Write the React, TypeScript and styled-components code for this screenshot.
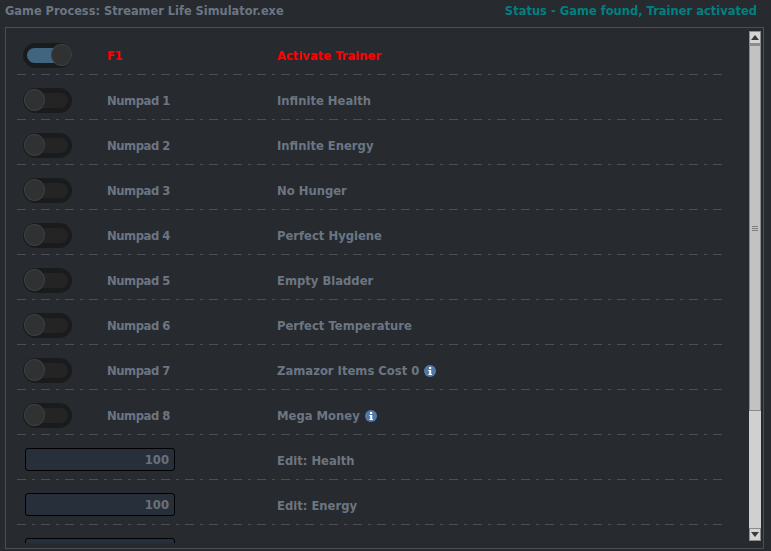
import React from 'react'
import styled, { createGlobalStyle } from 'styled-components'

const GlobalStyle = createGlobalStyle`
  html, body {
    margin: 0;
    height: 100%;
    background: #272a2f;
    overflow: hidden;
  }
`

const Page = styled.div`
  width: 771px;
  height: 551px;
  display: flex;
  flex-direction: column;
  padding: 0 5px;
  box-sizing: border-box;
  font-family: 'DejaVu Sans', Verdana, sans-serif;
  font-size: 11.6px;
  font-weight: bold;
  color: #6c7683;
`

const Header = styled.div`
  height: 27px;
  flex: none;
  display: flex;
  justify-content: space-between;
  align-items: flex-start;
  padding: 4px 9px 0 0;
  box-sizing: border-box;
  line-height: 15px;
`

const ProcessName = styled.span`
  color: #6c7683;
  font-size: 11.4px;
`

const Status = styled.span`
  color: #008080;
  font-size: 11.5px;
`

const Panel = styled.div`
  width: 759px;
  height: 522px;
  box-sizing: border-box;
  border: 1px solid #4b4e52;
  display: flex;
  padding: 2px 2px 5px 0;
`

const List = styled.div`
  width: 743px;
  flex: none;
  overflow: hidden;
`

const Row = styled.div`
  width: 705px;
  height: 45px;
  margin-left: 11px;
  padding-top: 6px;
  box-sizing: border-box;
  display: grid;
  grid-template-columns: 90px 170px 1fr;
  align-items: center;
  background: repeating-linear-gradient(
      to right,
      #4b4e52 0 9px,
      transparent 9px 15px,
      #4b4e52 15px 18px,
      transparent 18px 24px
    )
    left bottom / 100% 1px no-repeat;
`

const ControlCell = styled.div<{ $wide?: boolean }>`
  padding-left: 6px;
  display: flex;
  grid-column: ${({ $wide }) => ($wide ? 'span 2' : 'auto')};
`

const Hotkey = styled.span<{ $active?: boolean }>`
  letter-spacing: -0.45px;
  color: ${({ $active }) => ($active ? '#ff0000' : '#6c7683')};
`

const Label = styled.span<{ $active?: boolean }>`
  display: flex;
  align-items: center;
  gap: 5px;
  color: ${({ $active }) => ($active ? '#ff0000' : '#6c7683')};
`

const Toggle = styled.div`
  width: 49px;
  height: 25px;
  flex: none;
  box-sizing: border-box;
  border-radius: 13px;
  background: #1a1b1c;
  padding: 5px 4px;
  position: relative;
`

const ToggleTrack = styled.div<{ $on?: boolean }>`
  height: 15px;
  border-radius: 8px;
  background: ${({ $on }) => ($on ? '#41657f' : '#242424')};
`

const ToggleKnob = styled.div<{ $on?: boolean }>`
  position: absolute;
  top: 1px;
  left: ${({ $on }) => ($on ? '28px' : '1px')};
  width: 21px;
  height: 22px;
  border-radius: 50%;
  background: #303133;
  border: 1px solid #3e3f41;
  box-sizing: border-box;
`

const NumberBox = styled.div`
  width: 150px;
  height: 23px;
  flex: none;
  margin: 0 0 2px 2px;
  box-sizing: border-box;
  border: 1px solid #000;
  border-radius: 3px;
  background: #27303a;
  color: #6b7078;
  text-align: right;
  padding-right: 5px;
  line-height: 23px;
`

const ScrollBar = styled.div`
  width: 12px;
  margin: 1px 0 2px;
  flex: none;
  display: flex;
  flex-direction: column;
  background: #d0d0d0;
`

const ScrollButton = styled.div`
  width: 12px;
  height: 13px;
  box-sizing: border-box;
  flex: none;
  background: #d4d4d4;
  border: 1px solid #8c8c8c;
  display: flex;
  align-items: center;
  justify-content: center;
`

const ScrollThumb = styled.div`
  height: 367px;
  flex: none;
  box-sizing: border-box;
  background: #c2c2c2;
  border: 1px solid #8c8c8c;
  border-top-width: 2px;
  display: flex;
  align-items: center;
  justify-content: center;
`

const ScrollTrack = styled.div`
  flex: 1;
`

const InfoIcon = () => (
  <svg width="12" height="12" viewBox="0 0 12 12">
    <circle cx="6" cy="6" r="6" fill="#527aa8" />
    <rect x="5" y="2" width="2.2" height="2" fill="#fff" />
    <path d="M4.4 5h2.8v4h.8v1H4.4V9h.8V6h-.8z" fill="#fff" />
  </svg>
)

const ArrowUp = () => (
  <svg width="8" height="5" viewBox="0 0 8 5">
    <path d="M4 0l4 5H0z" fill="#3a3a3a" />
  </svg>
)

const ArrowDown = () => (
  <svg width="8" height="5" viewBox="0 0 8 5">
    <path d="M0 0h8L4 5z" fill="#3a3a3a" />
  </svg>
)

const Grip = () => (
  <svg width="6" height="5" viewBox="0 0 6 5">
    <path d="M0 0h6v1H0zM0 2h6v1H0zM0 4h6v1H0z" fill="#808080" />
  </svg>
)

const cheats = [
  { key: 'Numpad 1', name: 'Infinite Health' },
  { key: 'Numpad 2', name: 'Infinite Energy' },
  { key: 'Numpad 3', name: 'No Hunger' },
  { key: 'Numpad 4', name: 'Perfect Hygiene' },
  { key: 'Numpad 5', name: 'Empty Bladder' },
  { key: 'Numpad 6', name: 'Perfect Temperature' },
  { key: 'Numpad 7', name: 'Zamazor Items Cost 0', info: true },
  { key: 'Numpad 8', name: 'Mega Money', info: true },
]

const edits = ['Edit: Health', 'Edit: Energy']

export default function App() {
  return (
    <Page>
      <GlobalStyle />
      <Header>
        <ProcessName>Game Process: Streamer Life Simulator.exe</ProcessName>
        <Status>Status - Game found, Trainer activated</Status>
      </Header>
      <Panel>
        <List>
          <Row>
            <ControlCell>
              <Toggle>
                <ToggleTrack $on />
                <ToggleKnob $on />
              </Toggle>
            </ControlCell>
            <Hotkey $active>F1</Hotkey>
            <Label $active>Activate Trainer</Label>
          </Row>
          {cheats.map((cheat) => (
            <Row key={cheat.key}>
              <ControlCell>
                <Toggle>
                  <ToggleTrack />
                  <ToggleKnob />
                </Toggle>
              </ControlCell>
              <Hotkey>{cheat.key}</Hotkey>
              <Label>
                {cheat.name}
                {cheat.info && <InfoIcon />}
              </Label>
            </Row>
          ))}
          {edits.map((edit) => (
            <Row key={edit}>
              <ControlCell $wide>
                <NumberBox>100</NumberBox>
              </ControlCell>
              <Label>{edit}</Label>
            </Row>
          ))}
          <Row>
            <ControlCell $wide>
              <NumberBox />
            </ControlCell>
          </Row>
        </List>
        <ScrollBar>
          <ScrollButton>
            <ArrowUp />
          </ScrollButton>
          <ScrollThumb>
            <Grip />
          </ScrollThumb>
          <ScrollTrack />
          <ScrollButton>
            <ArrowDown />
          </ScrollButton>
        </ScrollBar>
      </Panel>
    </Page>
  )
}
